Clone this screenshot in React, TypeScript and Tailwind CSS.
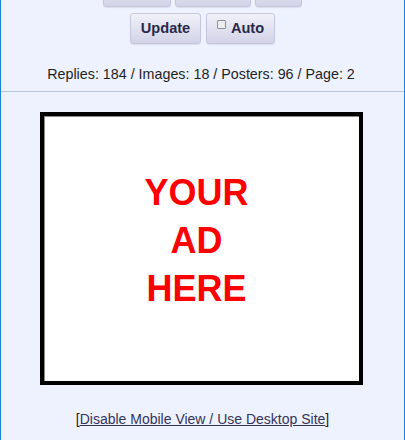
import React from "react";

function Btn({ children, className = "" }: { children: React.ReactNode; className?: string }) {
  return (
    <div
      className={
        "h-[31px] flex items-center justify-center rounded-[3px] border border-[#c6c7dc] bg-gradient-to-b from-[#f1f1f8] to-[#d2d3e8] text-[14.6px] font-bold text-[#29294a] shadow-[0_1px_1px_rgba(0,0,0,0.08)] " +
        className
      }
    >
      {children}
    </div>
  );
}

export default function App() {
  return (
    <div
      className="w-[405px] h-[440px] overflow-hidden bg-[#eef2ff] border-x border-[#1a86d9] flex flex-col items-center"
      style={{ fontFamily: '"Liberation Sans", Arial, sans-serif' }}
    >
      <div className="flex gap-[4px] mt-[-24px]">
        <Btn className="w-[68px]">Return</Btn>
        <Btn className="w-[76px]">Catalog</Btn>
        <Btn className="w-[47px]">Top</Btn>
      </div>
      <div className="flex gap-[5px] mt-[6px]">
        <Btn className="w-[71px]">Update</Btn>
        <Btn className="w-[69px]">
          <span className="w-[9px] h-[9px] border border-[#8e8e9c] bg-[#ededed] rounded-[1px] mb-[8px] mr-[5px]" />
          Auto
        </Btn>
      </div>
      <div className="mt-[21px] mr-[3px] text-[14.3px] text-[#1f1f1f] leading-[18px]">
        Replies: 184 / Images: 18 / Posters: 96 / Page: 2
      </div>
      <div className="w-full h-px bg-[#b7c5d9] mt-[8px]" />
      <div className="mt-[20px] ml-[-2px] w-[323px] h-[273px] bg-white border-4 border-black flex items-center justify-center shadow-[inset_1px_1px_0_#888]">
        <div className="text-[#ff0000] font-bold text-[36px] leading-[48px] text-center mt-[-16px] mr-[10px]">
          YOUR
          <br />
          AD
          <br />
          HERE
        </div>
      </div>
      <div className="mt-[24px] text-[14px] text-[#1f1f1f]">
        [<span className="text-[#34345c] underline">Disable Mobile View / Use Desktop Site</span>]
      </div>
    </div>
  );
}
